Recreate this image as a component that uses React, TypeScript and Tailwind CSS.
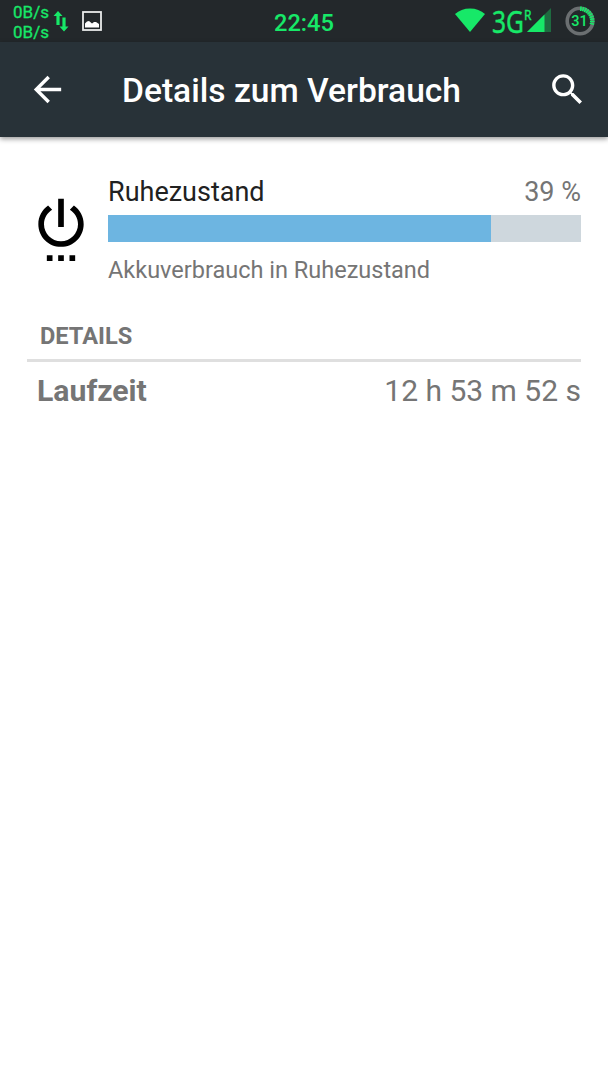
import type { ReactNode } from "react";

const USAGE = {
    name: "Ruhezustand",
    description: "Akkuverbrauch in Ruhezustand",
    percent: "39 %",
    barWidth: 81,
};

const DETAILS = [{ label: "Laufzeit", value: "12 h 53 m 52 s" }];

// Green ticks on the battery ring, in degrees clockwise from the top
const BATTERY_TICKS = [4, 15, 26, 37, 48, 59, 70, 81, 92, 103];

function MaterialIcon({ className, children }: { className: string; children: ReactNode }) {
    return (
        <svg viewBox="0 0 24 24" fill="currentColor" className={className}>
            {children}
        </svg>
    );
}

function BatteryRing() {
    return (
        <svg viewBox="0 0 30 30" className="ml-[13px] mt-[6px] h-[30px] w-[30px] shrink-0">
            <circle cx="15" cy="15" r="12.8" fill="none" stroke="#6b6f71" strokeWidth="3.6" />
            {BATTERY_TICKS.map((deg) => (
                <path key={deg} d="M15 .5V5" stroke="#17e868" strokeWidth="1.7" transform={`rotate(${deg} 15 15)`} />
            ))}
            <text x="14.6" y="20.4" textAnchor="middle" fill="#17e868" fontSize="15" fontWeight="500" fontFamily="Roboto, sans-serif" textLength="16.5" lengthAdjust="spacingAndGlyphs">
                31
            </text>
        </svg>
    );
}

function StatusBar() {
    return (
        <div className="grid h-[42px] grid-cols-3 bg-[#23282b] text-[#17e868]">
            <div className="flex pl-[13px]">
                <div className="w-9 pt-[3px] text-[17px] leading-[19.5px] whitespace-nowrap [-webkit-text-stroke:0.3px]">
                    <div>0B/s</div>
                    <div>0B/s</div>
                </div>
                <svg viewBox="0 0 16 22" fill="currentColor" className="mt-[10px] ml-1 h-[22px] w-4">
                    <path d="M5 1l4.5 5H6.6v9H3.4V6H.5zM11 21.5l-4.5-5h2.9v-9h3.2v9h2.9z" />
                </svg>
                <svg viewBox="0 0 20 20" className="mt-[11px] ml-[13px] h-5 w-5">
                    <rect x="1" y="1" width="18" height="18" fill="none" stroke="#e9eaea" strokeWidth="1.8" />
                    <path d="M3 16.5v-4l2-2 2-.5 3 2.5 2-1.5h2l3 2v3.500z" fill="#fff" />
                </svg>
            </div>

            <div className="pt-[2px] text-center text-[23.600px] leading-[42px] font-medium">22:45</div>

            <div className="flex justify-end pr-[13px]">
                <svg viewBox="0 0 30 24" fill="currentColor" className="mt-[8px] h-6 w-[30px] shrink-0">
                    <path d="M0 6C4 2.500 9 .5 15 .5S26 2.500 30 6L15 24z" />
                </svg>
                <div className="ml-[7px] h-[42px] w-[33px] shrink-0">
                    <span className="inline-block origin-left scale-x-[0.78] font-['Noto_Sans',sans-serif] text-[31.500px] leading-[42px] [-webkit-text-stroke:0.4px]">3G</span>
                </div>
                <div className="w-[3px] shrink-0">
                    <span className="-ml-[1px] block origin-left scale-x-[0.8] pt-[6px] font-['Noto_Sans',sans-serif] text-[15px] leading-4 [-webkit-text-stroke:0.4px]">R</span>
                </div>
                <svg viewBox="0 0 24 24" fill="currentColor" className="mt-[8px] -ml-[1px] mr-[1px] h-6 w-6 shrink-0">
                    <path d="M0 24L24 0v24z" opacity=".35" />
                    <path d="M0 24L17.500 6.500V24z" />
                </svg>
                <BatteryRing />
            </div>
        </div>
    );
}

function AppBar() {
    return (
        <header className="flex h-[95px] items-center bg-[#283238] pl-[27px] text-white shadow-[0_2px_5px_rgba(0,0,0,0.4)]">
            <button aria-label="Zurück">
                <MaterialIcon className="block h-[41px] w-[41px]">
                    <path d="M20 11H7.83l5.59-5.59L12 4l-8 8 8 8 1.41-1.41L7.83 13H20v-2z" />
                </MaterialIcon>
            </button>
            <h1 className="ml-[54px] pt-[4px] text-[33.600px] font-medium whitespace-nowrap">Details zum Verbrauch</h1>
            <button aria-label="Suchen" className="mr-5 ml-auto">
                <MaterialIcon className="block h-[41px] w-[41px]">
                    <path d="M15.500 14h-.79l-.28-.27C15.410 12.590 16 11.110 16 9.500 16 5.910 13.090 3 9.500 3S3 5.910 3 9.500 5.910 16 9.500 16c1.610 0 3.090-.59 4.230-1.570l.27.28v.79l5 4.990L20.490 19l-4.990-5zm-6 0C7.010 14 5 11.990 5 9.500S7.010 5 9.500 5 14 7.010 14 9.500 11.990 14 9.500 14z" />
                </MaterialIcon>
            </button>
        </header>
    );
}

export default function App() {
    return (
        <div className="min-h-[1080px] w-[608px] bg-white font-[Roboto,sans-serif] text-[#757575]">
            <StatusBar />
            <AppBar />

            <main className="pr-[27px] pl-[27px]">
                <section className="flex pt-[38px]">
                    <MaterialIcon className="mt-[18px] h-[68px] w-[68px] shrink-0 text-black">
                        <path d="M7 24h2v-2H7v2zm4 0h2v-2h-2v2zm2-22h-2v10h2V2zm3.560 2.440l-1.450 1.450C16.840 6.940 18 8.830 18 11c0 3.310-2.690 6-6 6s-6-2.690-6-6c0-2.170 1.160-4.060 2.880-5.120L7.440 4.440C5.360 5.880 4 8.280 4 11c0 4.420 3.580 8 8 8s8-3.580 8-8c0-2.720-1.360-5.120-3.440-6.560zM15 24h2v-2h-2v2z" />
                    </MaterialIcon>
                    <div className="ml-[13px] flex-1">
                        <div className="flex h-10 justify-between text-[27px] leading-[34px]">
                            <span className="text-[#212121]">{USAGE.name}</span>
                            <span>{USAGE.percent}</span>
                        </div>
                        <div className="h-[27px] bg-[#ced7dd]">
                            <div className="h-full bg-[#6db5e1]" style={{ width: `${USAGE.barWidth}%` }} />
                        </div>
                        <p className="pt-[14px] text-[23.500px] leading-7">{USAGE.description}</p>
                    </div>
                </section>

                <h2 className="mt-[35px] h-[43px] border-b-[3px] border-[#dfdfdf] pl-[13px] text-[23.600px] leading-[35px] font-bold">
                    DETAILS
                </h2>

                {DETAILS.map((row) => (
                    <div key={row.label} className="flex justify-between pt-[9px] pl-[10px] text-[30.200px] leading-10">
                        <span className="font-bold">{row.label}</span>
                        <span className="text-[30px]">{row.value}</span>
                    </div>
                ))}
            </main>
        </div>
    );
}
